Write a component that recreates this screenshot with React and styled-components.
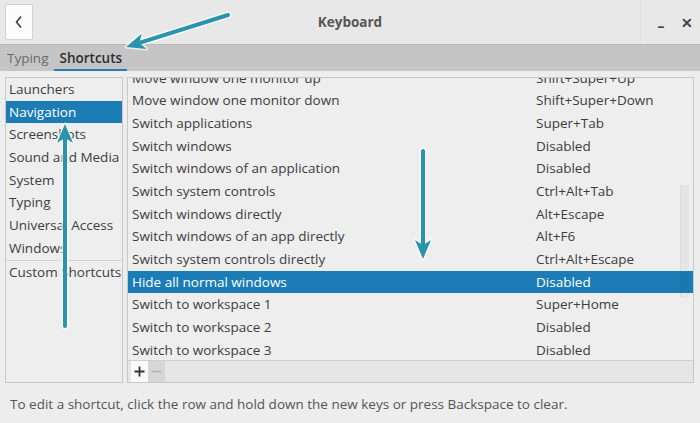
import styled, { createGlobalStyle } from 'styled-components'

const GlobalStyle = createGlobalStyle`
  html, body {
    margin: 0;
    padding: 0;
    background: #ededed;
  }
  body {
    font-family: "Open Sans", "Noto Sans", sans-serif;
    font-size: 13.5px;
    color: #3d3d3d;
  }
`

const Window = styled.div`
  position: relative;
  width: 700px;
  height: 423px;
  display: flex;
  flex-direction: column;
  background: #ededed;
  overflow: hidden;
`

const TitleBar = styled.header`
  height: 44px;
  display: grid;
  grid-template-columns: 1fr auto 1fr;
  align-items: center;
  background: #e8e8e8;
  padding: 0 5px;
  box-sizing: border-box;
`

const BackButton = styled.button`
  width: 28px;
  height: 36px;
  padding: 0;
  display: flex;
  align-items: center;
  justify-content: center;
  background: #fcfcfc;
  border: 1px solid #d2d2d2;
  border-radius: 2px;
  color: #3a3a3a;
`

const Title = styled.h1`
  margin: 0;
  font-size: 13.5px;
  font-weight: 700;
  color: #555;
`

const Controls = styled.div`
  justify-self: end;
  display: flex;
  align-items: center;
  height: 44px;
  border-left: 1px solid #e0e0e0;
  padding-left: 12px;
  gap: 10px;
`

const ControlButton = styled.span`
  width: 16px;
  display: flex;
  justify-content: center;
  color: #444;
  font-size: 14px;
  font-weight: 700;
  transform: translateY(${p => p.$down || 0}px);
`

const TabBar = styled.nav`
  height: 27px;
  display: flex;
  align-items: stretch;
  background: #c5c5c5;
  border-top: 1px solid #b9b9b9;
  padding-left: 2px;
  box-sizing: border-box;
`

const Tab = styled.div`
  display: flex;
  align-items: center;
  padding: 1px 5px 0;
  margin-right: 1px;
  color: ${p => (p.$active ? '#2e2e2e' : '#6a6a6a')};
  font-weight: ${p => (p.$active ? 600 : 400)};
  border-bottom: 2px solid ${p => (p.$active ? '#1f7fb6' : 'transparent')};
`

const Body = styled.main`
  display: flex;
  gap: 4px;
  padding: 6px 6px 0 5px;
  height: 306px;
  box-sizing: content-box;
`

const Sidebar = styled.ul`
  list-style: none;
  margin: 0;
  padding: 0;
  width: 118px;
  box-sizing: border-box;
  border: 1px solid #c8c8c8;
  background: #eeeeee;
`

const SideItem = styled.li`
  height: 22.7px;
  line-height: 23.5px;
  padding-left: 3px;
  white-space: nowrap;
  background: ${p => (p.$selected ? '#1c7cb6' : 'transparent')};
  color: ${p => (p.$selected ? '#ffffff' : '#3d3d3d')};
`

const SideDivider = styled.li`
  height: 0;
  margin: 0;
  border-top: 1px solid #d2d2d2;
`

const Panel = styled.section`
  position: relative;
  flex: 1;
  display: flex;
  flex-direction: column;
  border: 1px solid #c8c8c8;
  background: #eeeeee;
`

const ListViewport = styled.div`
  flex: 1;
  overflow: hidden;
`

const Rows = styled.div`
  margin-top: -11.5px;
`

const Row = styled.div`
  display: grid;
  grid-template-columns: 404px 1fr;
  height: 22.7px;
  line-height: 23.5px;
  padding-left: 4px;
  white-space: nowrap;
  background: ${p => (p.$selected ? '#1c7cb6' : 'transparent')};
  color: ${p => (p.$selected ? '#ffffff' : '#3d3d3d')};
`

const ScrollThumb = styled.div`
  position: absolute;
  right: 4px;
  top: 107px;
  width: 8px;
  height: 113px;
  background: rgba(0, 0, 0, 0.035);
  border-left: 1px solid rgba(0, 0, 0, 0.03);
`

const Toolbar = styled.div`
  height: 21px;
  display: flex;
  align-items: stretch;
  padding-left: 3px;
  border-top: 1px solid #cfcfcf;
  background: #e6e6e6;
`

const ToolButton = styled.span`
  width: 17px;
  display: flex;
  align-items: center;
  justify-content: center;
  background: ${p => (p.$disabled ? '#d6d6d6' : '#fafafa')};
`

const Footer = styled.footer`
  flex: 1;
  display: flex;
  align-items: center;
  padding: 2px 0 0 10px;
  color: #555;
`

const Annotations = styled.svg`
  position: absolute;
  left: 0;
  top: 0;
  pointer-events: none;
`

const categories = [
  'Launchers',
  'Navigation',
  'Screenshots',
  'Sound and Media',
  'System',
  'Typing',
  'Universal Access',
  'Windows',
]

const shortcuts = [
  ['Move window one monitor up', 'Shift+Super+Up'],
  ['Move window one monitor down', 'Shift+Super+Down'],
  ['Switch applications', 'Super+Tab'],
  ['Switch windows', 'Disabled'],
  ['Switch windows of an application', 'Disabled'],
  ['Switch system controls', 'Ctrl+Alt+Tab'],
  ['Switch windows directly', 'Alt+Escape'],
  ['Switch windows of an app directly', 'Alt+F6'],
  ['Switch system controls directly', 'Ctrl+Alt+Escape'],
  ['Hide all normal windows', 'Disabled'],
  ['Switch to workspace 1', 'Super+Home'],
  ['Switch to workspace 2', 'Disabled'],
  ['Switch to workspace 3', 'Disabled'],
  ['Switch to workspace 4', 'Disabled'],
]

const Arrow = ({ x1, y1, x2, y2 }) => {
  const dx = x2 - x1
  const dy = y2 - y1
  const len = Math.hypot(dx, dy)
  const ux = dx / len
  const uy = dy / len
  const bx = x2 - ux * 19
  const by = y2 - uy * 19
  const nx = x2 - ux * 14
  const ny = y2 - uy * 14
  const px = -uy * 8
  const py = ux * 8
  const head = `${x2},${y2} ${bx + px},${by + py} ${nx},${ny} ${bx - px},${by - py}`
  return (
    <g strokeLinecap="round" strokeLinejoin="round">
      <line x1={x1} y1={y1} x2={nx} y2={ny} stroke="rgba(255,255,255,0.7)" strokeWidth="7" />
      <polygon points={head} fill="rgba(255,255,255,0.7)" stroke="rgba(255,255,255,0.7)" strokeWidth="3" />
      <line x1={x1} y1={y1} x2={nx} y2={ny} stroke="#2a93ad" strokeWidth="4" />
      <polygon points={head} fill="#2a93ad" />
    </g>
  )
}

export default function App() {
  return (
    <Window>
      <GlobalStyle />
      <TitleBar>
        <BackButton>
          <svg width="10" height="14" viewBox="0 0 10 14">
            <path d="M7 1.5 L2.5 7 L7 12.5" fill="none" stroke="#3a3a3a" strokeWidth="1.6" />
          </svg>
        </BackButton>
        <Title>Keyboard</Title>
        <Controls>
          <ControlButton $down={3}>–</ControlButton>
          <ControlButton>✕</ControlButton>
        </Controls>
      </TitleBar>
      <TabBar>
        <Tab>Typing</Tab>
        <Tab $active>Shortcuts</Tab>
      </TabBar>
      <Body>
        <Sidebar>
          {categories.map(c => (
            <SideItem key={c} $selected={c === 'Navigation'}>{c}</SideItem>
          ))}
          <SideDivider />
          <SideItem>Custom Shortcuts</SideItem>
        </Sidebar>
        <Panel>
          <ListViewport>
            <Rows>
              {shortcuts.map(([name, keys]) => (
                <Row key={name} $selected={name === 'Hide all normal windows'}>
                  <span>{name}</span>
                  <span>{keys}</span>
                </Row>
              ))}
            </Rows>
          </ListViewport>
          <ScrollThumb />
          <Toolbar>
            <ToolButton>
              <svg width="11" height="11" viewBox="0 0 11 11">
                <path d="M5.5 0.5 V10.5 M0.5 5.5 H10.5" stroke="#333" strokeWidth="1.8" />
              </svg>
            </ToolButton>
            <ToolButton $disabled>
              <svg width="11" height="11" viewBox="0 0 11 11">
                <path d="M0.5 5.5 H10.5" stroke="#b2b2b2" strokeWidth="1.6" />
              </svg>
            </ToolButton>
          </Toolbar>
        </Panel>
      </Body>
      <Footer>To edit a shortcut, click the row and hold down the new keys or press Backspace to clear.</Footer>
      <Annotations width="700" height="423" viewBox="0 0 700 423">
        <Arrow x1={228} y1={15} x2={126} y2={47} />
        <Arrow x1={65} y1={326} x2={65} y2={124} />
        <Arrow x1={423} y1={151} x2={423} y2={259} />
      </Annotations>
    </Window>
  )
}
